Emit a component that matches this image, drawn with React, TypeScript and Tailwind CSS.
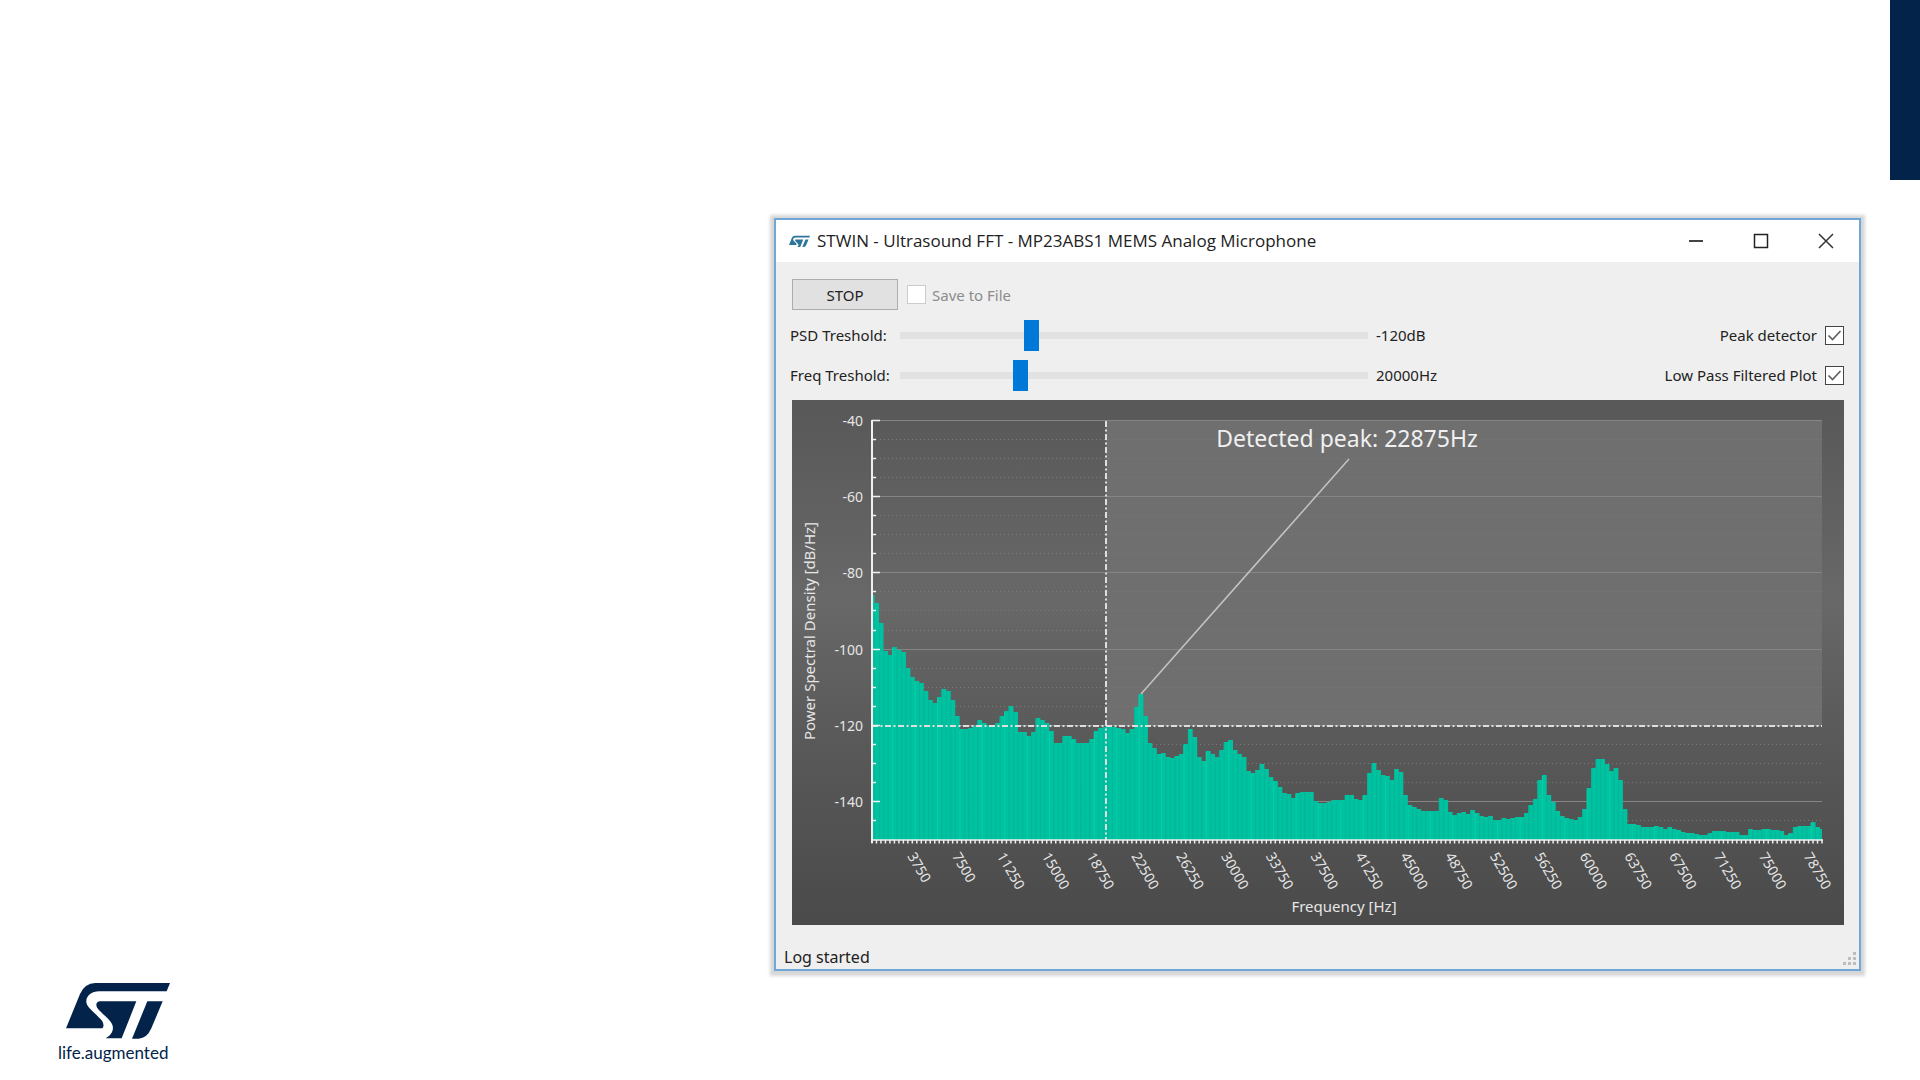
import React, { useState } from 'react';

// Height of every spectrum bin above the -150 dB base line, in chart units
const bins = [
  245, 237, 217, 189, 185, 193, 190, 188, 172, 163, 159, 157, 149, 140, 137, 143, 151, 149, 140, 124,
  111, 111, 112, 114, 120, 117, 115, 115, 117, 124, 129, 134, 128, 108, 108, 104, 108, 122, 120, 117,
  109, 97, 97, 104, 104, 101, 97, 97, 97, 101, 109, 112, 113, 114, 113, 112, 111, 107, 111, 133,
  146, 124, 97, 92, 86, 87, 83, 82, 84, 86, 96, 111, 103, 83, 79, 89, 86, 83, 90, 98,
  100, 90, 86, 83, 69, 67, 70, 76, 71, 63, 59, 53, 47, 46, 42, 47, 48, 48, 48, 39,
  37, 37, 38, 40, 40, 40, 45, 45, 41, 40, 45, 67, 77, 70, 65, 64, 60, 71, 68, 45,
  35, 33, 31, 29, 29, 29, 29, 42, 40, 28, 25, 27, 28, 26, 30, 27, 24, 23, 24, 20,
  20, 22, 21, 22, 23, 23, 27, 35, 41, 60, 65, 45, 38, 29, 24, 22, 21, 20, 23, 31,
  52, 72, 81, 81, 76, 69, 72, 60, 31, 16, 16, 15, 13, 13, 13, 14, 13, 11, 13, 11,
  10, 8, 7, 7, 6, 5, 5, 7, 9, 9, 9, 8, 8, 8, 5, 5, 11, 10, 10, 11,
  11, 10, 10, 9, 5, 7, 13, 14, 14, 14, 18, 13, 11,
];

const LEFT = 80;
const RIGHT = 1030;
const TOP = 21;
const BOTTOM = 440;
const STEP = (RIGHT - LEFT) / (bins.length - 1);

const levelY = (db: number) => TOP + ((-40 - db) * (BOTTOM - TOP)) / 110;

const levels = Array.from({ length: 22 }, (_, i) => -40 - i * 5);
const frequencies = Array.from({ length: 21 }, (_, i) => (i + 1) * 3750);

const Spectrum: React.FC<{ psd: number; freq: number; showPeak: boolean }> = ({ psd, freq, showPeak }) => {
  const limitY = Math.round(levelY(psd));
  const limitX = Math.round(LEFT + (freq / 80000) * 936);

  return (
    <svg
      viewBox="0 0 1052 525"
      className="block w-full font-['Noto_Sans',sans-serif]"
      role="img"
      aria-label="Power spectral density"
    >
      <defs>
        <linearGradient id="panel" x1="0" y1="0" x2="0" y2="1">
          <stop offset="0" stopColor="#585858" />
          <stop offset="0.38" stopColor="#686868" />
          <stop offset="0.65" stopColor="#595959" />
          <stop offset="1" stopColor="#4a4a4a" />
        </linearGradient>
        <clipPath id="plot">
          <rect x={LEFT} y={TOP} width={RIGHT - LEFT} height={BOTTOM - TOP} />
        </clipPath>
      </defs>
      <rect width="1052" height="525" fill="url(#panel)" />
      <rect x={limitX} y={TOP} width={RIGHT - limitX} height={limitY - TOP} fill="#6f6f6f" />

      {/* Grid */}
      {levels.map((db) => (
        <line
          key={db}
          x1={LEFT}
          x2={RIGHT}
          y1={Math.round(levelY(db)) - 0.5}
          y2={Math.round(levelY(db)) - 0.5}
          stroke={db % 20 === 0 ? '#858585' : '#7a7a7a'}
          strokeDasharray={db % 20 === 0 ? undefined : '1 3'}
        />
      ))}

      {/* Bars */}
      <g clipPath="url(#plot)">
        {bins.map((h, i) => {
          const x = LEFT + (i - 0.5) * STEP;
          return (
            <g key={i}>
              <rect x={x} y={BOTTOM - h} width={STEP + 0.3} height={h} fill="#00c2a0" />
              <rect x={x} y={BOTTOM - h + 1} width="1" height={h} fill={i % 5 === 0 ? '#00d2aa' : '#00b899'} />
            </g>
          );
        })}
      </g>

      {/* Thresholds */}
      <g stroke="#dedede" strokeWidth="2" strokeDasharray="6 2.5 2 2.5">
        <line x1={limitX} x2={limitX} y1={TOP} y2={BOTTOM} />
        <line x1={LEFT} x2={RIGHT} y1={limitY} y2={limitY} />
      </g>

      {/* Axes */}
      <g stroke="#f0f0f0">
        <line x1={LEFT} x2={LEFT} y1={TOP - 1} y2={BOTTOM + 3} strokeWidth="2" />
        <line x1={LEFT} x2={RIGHT + 1} y1={BOTTOM} y2={BOTTOM} strokeWidth="1.5" />
        {levels.map((db) => (
          <line
            key={db}
            x1={LEFT}
            x2={db % 20 === 0 ? LEFT + 8 : LEFT + 4}
            y1={Math.round(levelY(db)) - 0.5}
            y2={Math.round(levelY(db)) - 0.5}
            strokeWidth="1.5"
          />
        ))}
        {bins.map((_, i) => (
          <line key={i} x1={LEFT + i * STEP} x2={LEFT + i * STEP} y1={BOTTOM} y2={BOTTOM + 3.5} strokeWidth="1.5" />
        ))}
      </g>

      <g fill="#e6e6e6" fontSize="14">
        {levels
          .filter((db) => db % 20 === 0)
          .map((db) => (
            <text key={db} x="71" y={Math.round(levelY(db)) + 5} textAnchor="end">
              {db}
            </text>
          ))}
        {frequencies.map((f, i) => (
          <text key={f} transform={`translate(${115 + i * 10 * STEP} 456) rotate(60)`}>
            {f}
          </text>
        ))}
        <text x="552" y="512" textAnchor="middle" fontSize="15">
          Frequency [Hz]
        </text>
        <text transform="translate(23 231) rotate(-90)" textAnchor="middle" fontSize="15">
          Power Spectral Density [dB/Hz]
        </text>
      </g>

      {showPeak && (
        <g>
          <line x1="349" y1="294" x2="557" y2="59" stroke="#c4c4c4" strokeWidth="1.5" />
          <text x="555" y="47" textAnchor="middle" fontSize="23" fill="#f0f0f0">
            Detected peak: 22875Hz
          </text>
        </g>
      )}
    </svg>
  );
};

const LogoMark: React.FC<{ className: string }> = ({ className }) => (
  <svg viewBox="78 68 312 168" className={className} fill="currentColor" aria-hidden="true">
    <path d="M78 204 L120 101 Q134 69 166 68 H390 L380 93 H178 C146 93 130 118 144 138 C152 150 178 170 187 183 Q194 196 187 204 Z" />
    <path d="M180 123 H289 L245 234 H197 C214 225 224 208 216 191 C208 175 180 155 172 143 C165 131 171 123 180 123 Z" />
    <path d="M322 123 H368 L334 204 Q321 234 296 235 H276 Z" />
  </svg>
);

type CheckProps = {
  id: string;
  checked: boolean;
  disabled?: boolean;
  onChange: (checked: boolean) => void;
};

const CheckBox: React.FC<CheckProps> = ({ id, checked, disabled, onChange }) => (
  <span className="grid shrink-0">
    <input
      id={id}
      type="checkbox"
      checked={checked}
      disabled={disabled}
      onChange={(e) => onChange(e.target.checked)}
      className="col-start-1 row-start-1 size-[19px] appearance-none border border-[#444444] bg-white disabled:border-[#cccccc]"
    />
    {checked && (
      <svg viewBox="0 0 19 19" className="pointer-events-none col-start-1 row-start-1 size-[19px]" fill="none">
        <path d="M3.5 9.5 L7.5 13.5 L15.5 5" stroke="#606060" strokeWidth="1.7" />
      </svg>
    )}
  </span>
);

const sliderClass =
  'block h-[31px] w-full appearance-none bg-transparent [&::-webkit-slider-runnable-track]:h-[7px] [&::-webkit-slider-runnable-track]:bg-[#e2e2e2] [&::-webkit-slider-thumb]:-mt-3 [&::-webkit-slider-thumb]:h-[31px] [&::-webkit-slider-thumb]:w-[15px] [&::-webkit-slider-thumb]:appearance-none [&::-webkit-slider-thumb]:bg-[#0078d7]';

const rowClass = 'grid h-10 grid-cols-[110px_468fr_476fr] items-center';

const App: React.FC = () => {
  const [running, setRunning] = useState(true);
  const [save, setSave] = useState(false);
  const [psd, setPsd] = useState(-120);
  const [freq, setFreq] = useState(20000);
  const [peak, setPeak] = useState(true);
  const [lowPass, setLowPass] = useState(true);

  return (
    <div className="flex min-h-screen flex-col bg-white">
      <header className="flex h-[218px] shrink-0 justify-end">
        <div className="h-[180px] w-[30px] bg-[#03234b]" />
      </header>

      <div className="flex flex-1 gap-[6px]">
        <aside className="flex w-2/5 shrink-0 flex-col justify-end pb-[15px] pl-[58px] text-[#03234b]">
          <LogoMark className="ml-2 h-[56px] w-[104px]" />
          <p className="mt-[2px] font-['Lato',sans-serif] text-[17px] leading-6">life.augmented</p>
        </aside>

        <main className="min-w-0 flex-1 pr-[59px]">
          <div className="border-2 border-[#6fa8d8] bg-[#efefef] font-['Noto_Sans',sans-serif] text-[15px] leading-5 text-[#222222] shadow-[0_1px_3px_4px_rgba(0,0,0,0.16)]">
            {/* Title bar */}
            <div className="flex h-[42px] items-center bg-white pr-px pl-[13px]">
              <LogoMark className="h-[13px] w-[21px] text-[#2a7599]" />
              <h1 className="ml-[7px] flex-1 truncate font-['Open_Sans',sans-serif] text-[17px] leading-6">
                STWIN - Ultrasound FFT - MP23ABS1 MEMS Analog Microphone
              </h1>
              <button aria-label="Minimize" className="flex h-full w-[65px] items-center justify-center">
                <svg viewBox="0 0 16 16" className="size-4" fill="none" stroke="#444444" strokeWidth="2">
                  <path d="M1 8 H15" />
                </svg>
              </button>
              <button aria-label="Maximize" className="flex h-full w-[65px] items-center justify-center">
                <svg viewBox="0 0 16 16" className="size-4" fill="none" stroke="#222222" strokeWidth="1.5">
                  <path d="M1.5 1.5 H14.5 V14.5 H1.5 Z" />
                </svg>
              </button>
              <button aria-label="Close" className="flex h-full w-[65px] items-center justify-center">
                <svg viewBox="0 0 16 16" className="size-4" fill="none" stroke="#333333" strokeWidth="1.5">
                  <path d="M1 1 L15 15 M15 1 L1 15" />
                </svg>
              </button>
            </div>

            {/* Controls */}
            <div className="pt-[17px] pr-[15px] pl-[14px]">
              <div className="mb-[5px] flex items-center">
                <button
                  onClick={() => setRunning(!running)}
                  className="ml-[2px] h-[31px] w-[106px] border border-[#adadad] bg-[#e1e1e1]"
                >
                  {running ? 'STOP' : 'START'}
                </button>
                <label htmlFor="save" className="ml-[9px] flex items-center gap-[6px] text-[#8c8c8c]">
                  <CheckBox id="save" checked={save} disabled={running} onChange={setSave} />
                  Save to File
                </label>
              </div>
              <div className={rowClass}>
                <label htmlFor="psd">PSD Treshold:</label>
                <input
                  id="psd"
                  type="range"
                  min={-150}
                  max={-40}
                  value={psd}
                  onChange={(e) => setPsd(Number(e.target.value))}
                  className={sliderClass}
                />
                <div className="flex items-center justify-between pl-2">
                  <output htmlFor="psd">{psd}dB</output>
                  <label htmlFor="peak" className="flex items-center gap-2">
                    Peak detector
                    <CheckBox id="peak" checked={peak} onChange={setPeak} />
                  </label>
                </div>
              </div>
              <div className={rowClass}>
                <label htmlFor="freq">Freq Treshold:</label>
                <input
                  id="freq"
                  type="range"
                  min={0}
                  max={80000}
                  value={freq}
                  onChange={(e) => setFreq(Number(e.target.value))}
                  className={sliderClass}
                />
                <div className="flex items-center justify-between pl-2">
                  <output htmlFor="freq">{freq}Hz</output>
                  <label htmlFor="lowpass" className="flex items-center gap-2">
                    Low Pass Filtered Plot
                    <CheckBox id="lowpass" checked={lowPass} onChange={setLowPass} />
                  </label>
                </div>
              </div>
              <div className="mt-[5px] ml-[2px]">
                <Spectrum psd={psd} freq={freq} showPeak={peak} />
              </div>
            </div>

            {/* Status bar */}
            <div className="flex h-11 items-end justify-between pr-[3px] pl-2">
              <span className="text-base leading-6">Log started</span>
              <svg viewBox="0 0 13 13" className="mb-1 size-[13px]" fill="#bdbdbd" aria-hidden="true">
                <path d="M10 0h3v3h-3z M5 5h3v3h-3z M10 5h3v3h-3z M0 10h3v3h-3z M5 10h3v3h-3z M10 10h3v3h-3z" />
              </svg>
            </div>
          </div>
        </main>
      </div>
    </div>
  );
};

export default App;
